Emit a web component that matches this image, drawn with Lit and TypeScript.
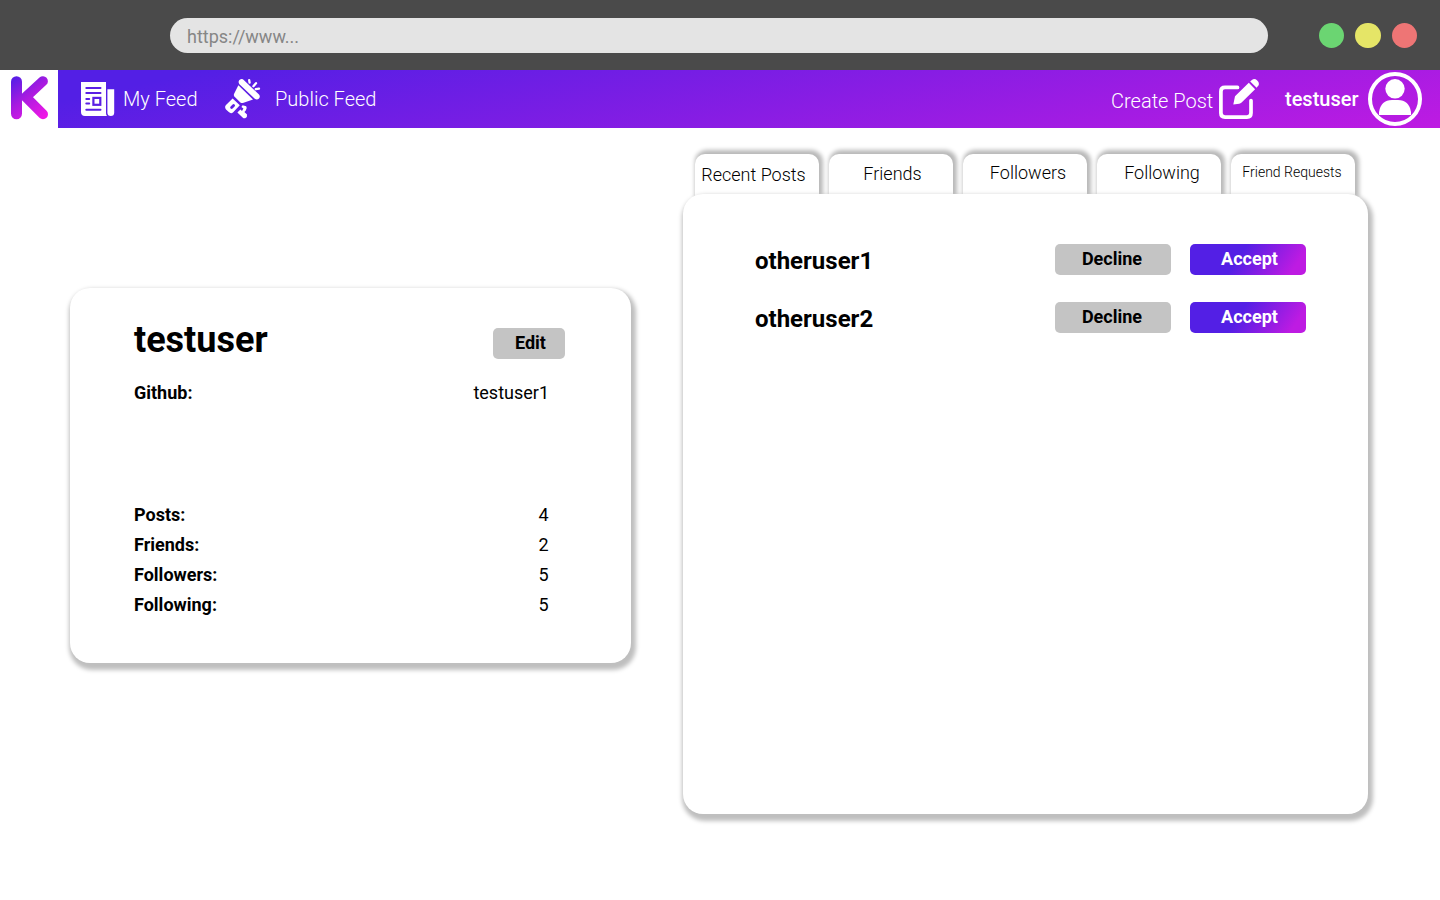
import { LitElement, html, css } from "lit";
import { customElement } from "lit/decorators.js";

const logo = html`<svg width="58" height="58" viewBox="0 0 58 58" fill="none">
  <defs><linearGradient id="k" gradientUnits="userSpaceOnUse" x1="14" y1="9" x2="44" y2="47">
    <stop offset="0" stop-color="#5a1ee6" /><stop offset=".45" stop-color="#a81be0" /><stop offset="1" stop-color="#ef18e6" />
  </linearGradient></defs>
  <g stroke="url(#k)" stroke-linecap="round" stroke-linejoin="round">
    <path d="M16.500 11.700V43.800" stroke-width="11" />
    <path d="M42.900 11.200L25.800 27L43 44.200" stroke-width="10" />
  </g>
</svg>`;

const newspaper = html`<svg width="34" height="34" viewBox="0 0 34 34">
  <path fill="#fff" d="M0 0H25V31Q25 32.800 26 34H4Q0 34 0 30Z" />
  <path fill="#fff" d="M26.400 7.200H33.200V30.500Q33.200 34 29.800 34Q26.400 34 26.400 30.500Z" />
  <path fill="none" stroke="#5a1fe4" stroke-width="2" stroke-linecap="round" d="M5.300 6H19.500M5.300 11H19.500M5.300 17H8.200M5.300 21.500H8.200M5.300 27.700H19.500" />
  <rect x="12.400" y="15.900" width="6.900" height="6.900" fill="none" stroke="#5a1fe4" stroke-width="2.200" />
</svg>`;

const megaphone = html`<svg width="36" height="40" viewBox="0 0 36 40">
  <g fill="#fff">
    <path d="M14.400 1Q17-1 19 1.200L34 15.600Q35.600 17.600 34 19.600Q32 21.400 29.800 19.800L14.400 5.200Q12.800 3 14.400 1Z" />
    <path d="M13.400 6.200L28 20.400L18.600 23.800Q16.600 24.400 15.400 23.400L9.400 17.600Q8.400 16.400 9 15Z" />
    <path d="M7.600 19.600L14.800 26.200L8.200 33.200Q6 35.200 3.800 33L1 30.400Q-.800 28 1 26Z" />
    <path d="M17.600 26.200L21.200 27.200Q22.600 29.200 20.800 31.400L19.400 33L22 35.400Q22.600 38 20.200 39.200Q18.800 39.600 17.600 38.400L12.400 33.400L15.400 30.400L17 32L18.400 29.400L16.400 28Z" />
  </g>
  <path d="M6.600 28.600L8.600 26.600" stroke="#5c1fe4" stroke-width="2.800" stroke-linecap="round" />
  <path d="M24.200 1.200L24.600 3.600M31 4.200L28.400 7.200M34 9.600L30.800 10.200" stroke="#fff" stroke-width="2.300" stroke-linecap="round" />
</svg>`;

const compose = html`<svg width="42" height="42" viewBox="0 0 42 42">
  <path d="M18.500 9.400H6Q1.900 9.400 1.900 13.400V35.100Q1.900 39.100 6 39.100H28Q32 39.100 32 35.100V22.500" fill="none" stroke="#fff" stroke-width="3.700" stroke-linecap="round" />
  <path fill="#fff" d="M14.300 26.500L16 18.300L29.800 4.700L36.100 11.200L22.600 24.600Q21.600 25.600 20.200 25.800Z" />
  <path fill="#fff" d="M31.200 3.500L32.900 1.900Q35.500 0 38.200 2.400Q40.800 5 39.400 7.600L37.600 9.800Z" />
</svg>`;

const avatar = html`<svg width="54" height="54" viewBox="0 0 54 54">
  <circle cx="27" cy="27" r="25" fill="none" stroke="#fff" stroke-width="4" />
  <circle cx="27" cy="16.800" r="9.700" fill="#fff" />
  <path fill="#fff" d="M11 43V40Q13 28 24 28H30Q41 28 43 40V43Z" />
</svg>`;

@customElement("app-root")
export class AppRoot extends LitElement {
  static styles = css`
    :host { display: block; width: 1440px; height: 900px; overflow: hidden; background: #fff; color: #000; font-family: Roboto, sans-serif; font-size: 18px; line-height: 22px; }
    * { box-sizing: border-box; }
    svg { display: block; flex: none; }
    .chrome { height: 70px; background: #4a4a4a; display: flex; align-items: center; padding: 1px 23px 0 170px; }
    .url { width: 1098px; height: 35px; border-radius: 18px; background: #e4e4e4; color: #868686; padding: 8px 17px; }
    .dots { display: flex; gap: 11.250px; margin-left: auto; }
    .dot { width: 25.200px; height: 25.200px; border-radius: 50%; }
    .green { background: #6bd572; } .yellow { background: #e5e567; } .red { background: #ee7575; }
    .bar { height: 58px; display: flex; }
    .nav { flex: 1; display: flex; align-items: center; padding: 0 18px 0 23px; color: #fff; font-size: 20px; font-weight: 300; line-height: 24px; background: linear-gradient(168deg, #531fe5 9%, #be1be2 100%); }
    .item { display: flex; align-items: center; }
    .feed { gap: 8px; }
    .public { margin-left: 27px; gap: 14.500px; }
    .create { margin-left: auto; gap: 5.700px; }
    .create span { padding-top: 4px; }
    .me { margin-left: 24px; gap: 9.500px; font-weight: 500; }
    .main { display: flex; align-items: flex-start; padding: 26px 0 0 70px; }
    .panel { background: #fff; border-radius: 20px; box-shadow: 2px 4px 4px 3px #bfbfbf; }
    .profile { width: 561px; height: 375px; margin-top: 134px; padding: 31px 66px 0 64px; }
    .head { display: flex; justify-content: space-between; }
    h1 { margin: 0; font-size: 36px; line-height: 42px; font-weight: 700; }
    .btn { display: flex; justify-content: center; width: 116px; height: 31px; border-radius: 5px; background: #c4c4c4; font-weight: 700; padding-top: 4px; }
    .edit { width: 72px; margin-top: 9px; padding-left: 3px; }
    .accept { color: #fff; background: linear-gradient(124deg, #531fe5 42%, #be1be2 88%); padding-left: 3px; }
    .decline { padding-right: 2px; }
    .row { display: flex; justify-content: space-between; height: 30px; padding-right: 16.300px; }
    .row b { font-weight: 700; }
    .github { margin-top: 21px; height: 122px; padding-right: 16px; }
    .side { width: 685px; margin-left: 52px; }
    .tabs { display: flex; gap: 10px; padding-left: 12px; }
    .tab { width: 124px; height: 44px; margin-bottom: -4px; border-radius: 10px 10px 0 0; background: #fff; box-shadow: 2px -2px 4px 2px #b9b9b9; font-weight: 300; text-align: center; padding-top: 8px; white-space: nowrap; }
    .t0 { padding-top: 10px; padding-right: 7px; }
    .t1 { padding-top: 9px; padding-left: 3px; }
    .t2, .t3 { padding-left: 6px; }
    .t4 { font-size: 14px; padding-top: 7px; padding-right: 2px; }
    .list { position: relative; height: 620px; padding: 50px 62px 0 72px; }
    .request { display: flex; height: 58px; gap: 19px; }
    .name { flex: 1; font-size: 24px; line-height: 28px; font-weight: 700; padding-top: 3px; }
  `;

  tabs = ["Recent Posts", "Friends", "Followers", "Following", "Friend Requests"];
  stats = [["Posts:", "4"], ["Friends:", "2"], ["Followers:", "5"], ["Following:", "5"]];
  requests = ["otheruser1", "otheruser2"];

  render() {
    return html`
      <div class="chrome">
        <div class="url">https://www...</div>
        <div class="dots"><div class="dot green"></div><div class="dot yellow"></div><div class="dot red"></div></div>
      </div>
      <div class="bar">
        ${logo}
        <nav class="nav">
          <div class="item feed">${newspaper}<span>My Feed</span></div>
          <div class="item public">${megaphone}<span>Public Feed</span></div>
          <div class="item create"><span>Create Post</span>${compose}</div>
          <div class="item me"><span>testuser</span>${avatar}</div>
        </nav>
      </div>
      <main class="main">
        <section class="panel profile">
          <div class="head"><h1>testuser</h1><div class="btn edit">Edit</div></div>
          <div class="row github"><b>Github:</b><span>testuser1</span></div>
          ${this.stats.map(([k, v]) => html`<div class="row"><b>${k}</b><span>${v}</span></div>`)}
        </section>
        <section class="side">
          <div class="tabs">${this.tabs.map((t, i) => html`<div class="tab t${i}">${t}</div>`)}</div>
          <div class="panel list">
            ${this.requests.map((n) => html`<div class="request"><div class="name">${n}</div><div class="btn decline">Decline</div><div class="btn accept">Accept</div></div>`)}
          </div>
        </section>
      </main>`;
  }
}
